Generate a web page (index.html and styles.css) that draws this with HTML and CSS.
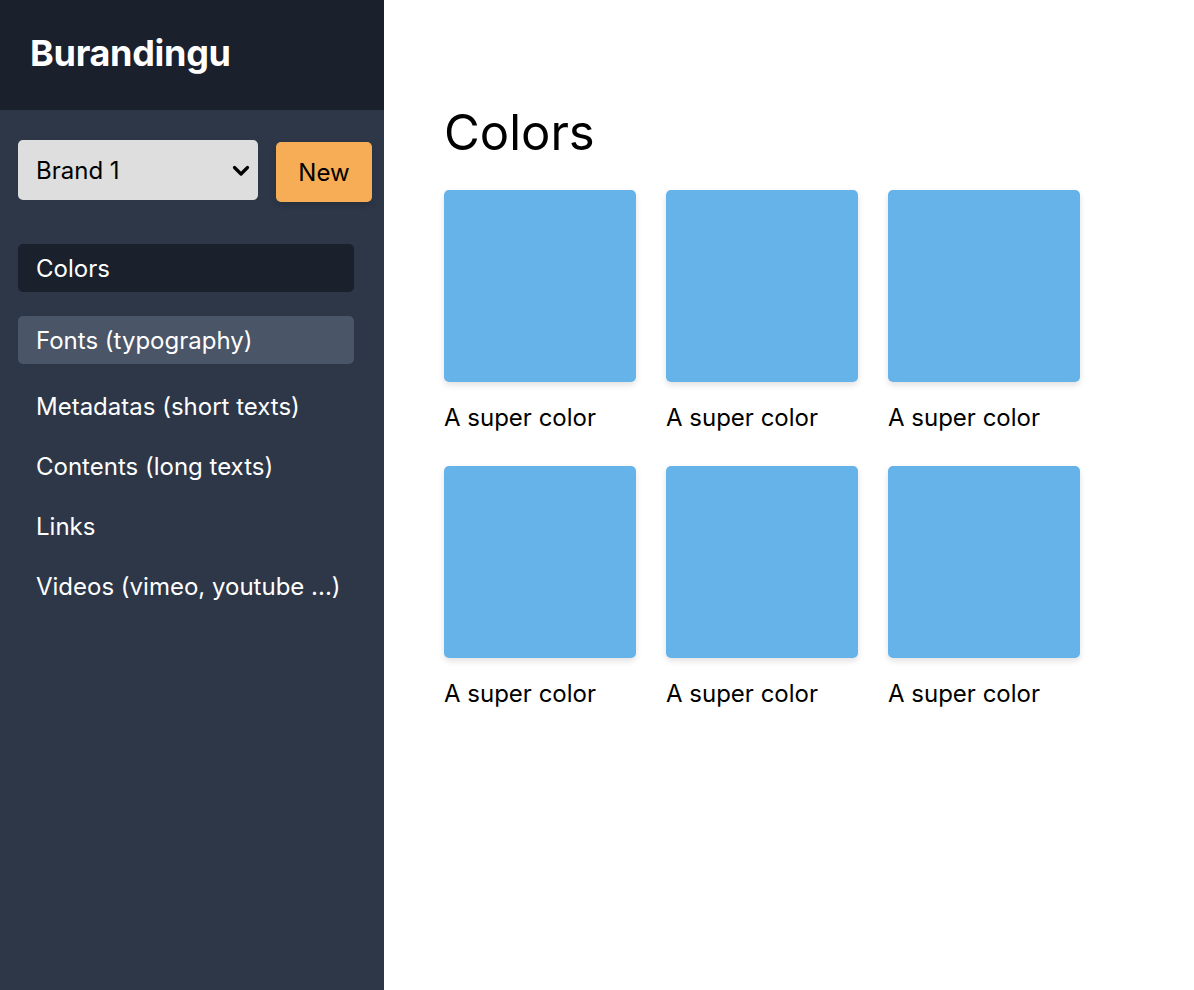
FILE: index.html
```html
<!DOCTYPE html>
<html lang="en">
<head>
<meta charset="utf-8">
<title>Burandingu</title>
<link rel="stylesheet" href="styles.css">
</head>
<body>
<div class="app">
  <aside class="sidebar">
    <header class="brand">Burandingu</header>
    <div class="controls">
      <div class="select-wrap">
        <select class="brand-select">
          <option>Brand 1</option>
        </select>
        <svg class="chevron" width="18" height="12" viewBox="0 0 18 12"><path d="M2.5 2.5 L9 9 L15.5 2.5" fill="none" stroke="#000" stroke-width="3.2" stroke-linecap="round" stroke-linejoin="round"/></svg>
      </div>
      <button class="new-btn">New</button>
    </div>
    <nav class="menu">
      <a class="item active">Colors</a>
      <a class="item hover">Fonts (typography)</a>
      <a class="item">Metadatas (short texts)</a>
      <a class="item">Contents (long texts)</a>
      <a class="item">Links</a>
      <a class="item">Videos (vimeo, youtube ...)</a>
    </nav>
  </aside>
  <main class="main">
    <h1 class="title">Colors</h1>
    <div class="grid">
      <div class="swatch"><div class="chip"></div><div class="label">A super color</div></div>
      <div class="swatch"><div class="chip"></div><div class="label">A super color</div></div>
      <div class="swatch"><div class="chip"></div><div class="label">A super color</div></div>
      <div class="swatch"><div class="chip"></div><div class="label">A super color</div></div>
      <div class="swatch"><div class="chip"></div><div class="label">A super color</div></div>
      <div class="swatch"><div class="chip"></div><div class="label">A super color</div></div>
    </div>
  </main>
</div>
</body>
</html>
```
FILE: styles.css
```css
* { box-sizing: border-box; }
html, body { margin: 0; padding: 0; }
body {
  font-family: Inter, "Noto Sans", "Liberation Sans", sans-serif;
  color: #000;
  background: #fff;
}
.app {
  display: flex;
  min-height: 990px;
}
.sidebar {
  width: 384px;
  flex: 0 0 384px;
  background: #2d3748;
  color: #fff;
}
.brand {
  height: 110px;
  background: #1a202c;
  padding: 0 30px 4px;
  display: flex;
  align-items: center;
  font-size: 36px;
  font-weight: 700;
  letter-spacing: -0.3px;
}
.controls {
  display: flex;
  align-items: flex-start;
  gap: 18px;
  padding: 30px 0 0 18px;
}
.select-wrap {
  position: relative;
  flex: 0 0 240px;
  width: 240px;
  height: 60px;
}
.brand-select {
  appearance: none;
  -webkit-appearance: none;
  width: 100%;
  height: 100%;
  border: none;
  border-radius: 5px;
  background: #dedede;
  color: #000;
  font-family: inherit;
  font-size: 24px;
  padding: 0 18px;
  outline: none;
}
.chevron {
  position: absolute;
  right: 8px;
  top: 25px;
  pointer-events: none;
}
.new-btn {
  flex: 0 0 96px;
  margin-top: 2px;
  width: 96px;
  height: 60px;
  border: none;
  border-radius: 5px;
  background: #f6ad55;
  color: #000;
  font-family: inherit;
  font-size: 24px;
  font-weight: 400;
  padding: 0;
  box-shadow: 0 3px 6px rgba(0,0,0,0.15);
}
.menu {
  display: flex;
  flex-direction: column;
  padding: 42px 18px 0;
}
.item {
  display: flex;
  align-items: center;
  width: 336px;
  height: 48px;
  padding: 0 18px;
  border-radius: 5px;
  font-size: 24px;
  color: #fff;
  white-space: nowrap;
  margin-bottom: 12px;
}
.item.active { background: #1a202c; margin-bottom: 24px; }
.item.hover { background: #4a5568; margin-bottom: 18px; }
.main {
  flex: 1;
  padding: 100px 0 0 60px;
}
.title {
  margin: 0 0 24px;
  font-size: 49px;
  font-weight: 400;
  line-height: 66px;
}
.grid {
  display: grid;
  grid-template-columns: repeat(3, 192px);
  column-gap: 30px;
  row-gap: 34px;
}
.chip {
  width: 192px;
  height: 192px;
  background: #66b3e9;
  border-radius: 5px;
  box-shadow: 0 3px 6px rgba(0,0,0,0.12);
}
.label {
  padding-top: 22px;
  font-size: 24px;
  line-height: 28px;
}
```
